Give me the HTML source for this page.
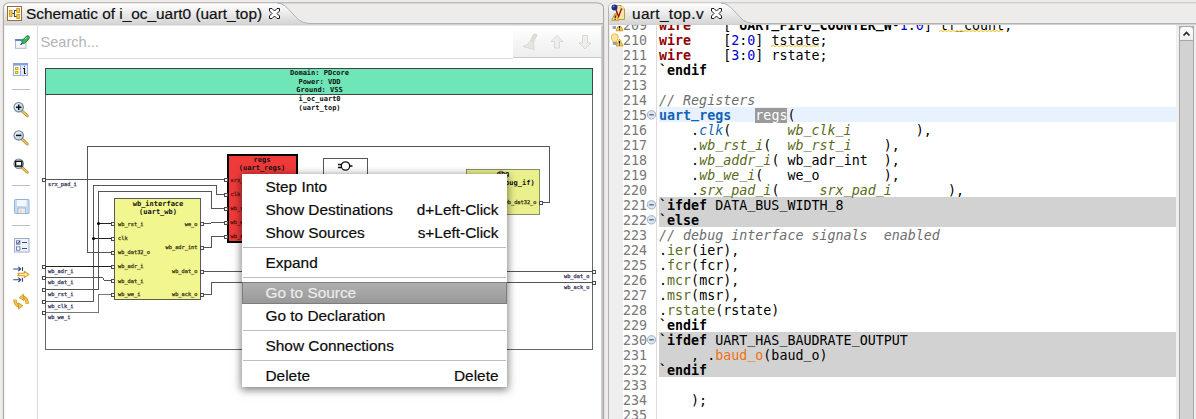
<!DOCTYPE html>
<html><head><meta charset="utf-8"><title>Schematic of i_oc_uart0 (uart_top)</title>
<style>
html,body{margin:0;padding:0;}
body{width:1196px;height:419px;overflow:hidden;background:#edeceb;position:relative;font-family:"Liberation Sans","DejaVu Sans",sans-serif;}
.abs{position:absolute;}
.tabtxt{font-size:15.4px;color:#111;-webkit-text-stroke:.2px #111;white-space:nowrap;line-height:18px;}
pre{margin:0;}
#edclip{left:609px;top:25px;width:567px;height:394px;background:#fff;overflow:hidden;}
#code,#ln{top:-7px;font-family:"DejaVu Sans Mono","Liberation Mono",monospace;font-size:13.33px;line-height:15px;white-space:pre;}
#code{left:50px;color:#000;}
#ln{left:14px;color:#787878;}
.u{position:relative;top:-2px;}
.kw{color:#930000;font-weight:bold;}
.dir{font-weight:bold;}
.num{color:#0000d0;}
.cm{color:#6e6e6e;font-style:italic;}
.mod{color:#1464b4;font-weight:bold;}
.port{color:#5a6b1a;font-style:italic;}
.portn{color:#5a6b1a;}
.org{color:#f07010;}
.sel{background:#9a9a9a;color:#fff;}
.wavy{text-decoration:underline wavy #e8c030 1px;text-underline-offset:1px;}
#menu{left:242px;top:174px;width:265px;height:213px;background:#fff;box-shadow:0 2px 8px 1px rgba(0,0,0,.5);font-size:15.4px;color:#0c0c0c;-webkit-text-stroke:.2px #0c0c0c;}
#menu .it{position:absolute;left:23.5px;white-space:nowrap;line-height:18px;}
#menu .ac{position:absolute;right:8.5px;white-space:nowrap;line-height:18px;}
#menu .sep{position:absolute;left:1px;right:1px;height:1px;background:#bdbdbd;}
#menu .hl{position:absolute;left:0;right:0;top:108px;height:22px;background:linear-gradient(#b0b0b0,#989898);box-shadow:inset 0 0 0 1px #7d7d7d;}
</style></head><body>
<svg class="abs" style="left:0;top:0" width="1196" height="419" viewBox="0 0 1196 419">
<defs>
<linearGradient id="tabg" x1="0" y1="0" x2="0" y2="1"><stop offset="0" stop-color="#ffffff"/><stop offset="0.25" stop-color="#f4f4f4"/><stop offset="1" stop-color="#d3d3d3"/></linearGradient>
<linearGradient id="sbg" x1="0" y1="0" x2="0" y2="1"><stop offset="0" stop-color="#ffffff"/><stop offset="1" stop-color="#ededed"/></linearGradient>
</defs>
<!-- left panel -->
<path d="M3.5,420 L3.5,9 Q3.5,3 9,3 L597,3 Q603.500,3 603.500,9 L603.500,420 Z" fill="#ffffff" stroke="#aeaca8" stroke-width="1.300"/>
<path d="M4,25 L4,9 Q4,3.500 9,3.500 L597,3.500 Q603,3.500 603,9 L603,25 Z" fill="#edeceb"/>
<path d="M4,25 L4,9 Q4,3.500 9,3.500 L277,3.500 C290,3.500 294,23.500 309,23.500 L603,23.500 L603,25 Z" fill="url(#tabg)"/>
<path d="M277,3 C290,3 294,23.500 309,23.500 L603,23.500" fill="none" stroke="#b3b1ad"/>
<rect x="4" y="24" width="599" height="1.500" fill="#d0d0d0"/>
<!-- left panel inner -->
<rect x="37" y="26" width="1" height="393" fill="#dcdcdc"/>
<rect x="38" y="58" width="475" height="1" fill="#dedede"/>
<rect x="513" y="26" width="88" height="32" fill="url(#sbg)"/>
<rect x="513" y="57" width="88" height="1" fill="#c9c9c9"/>
<rect x="601" y="26" width="1" height="393" fill="#cfcfcf"/><rect x="602" y="26" width="1" height="393" fill="#c2c2c2"/>
<!-- right panel -->
<path d="M608.500,420 L608.500,9 Q608.500,3 614,3 L1197,3 L1197,420 Z" fill="#ffffff" stroke="#b3b1ad"/>
<path d="M609,25 L609,9 Q609,3.500 614,3.500 L1197,3.500 L1197,25 Z" fill="#edeceb"/>
<path d="M609,25 L609,9 Q609,3.500 614,3.500 L721,3.500 C734,3.500 738,23.500 753,23.500 L1197,23.500 L1197,25 Z" fill="url(#tabg)"/>
<path d="M721,3 C734,3 738,23.500 753,23.500 L1197,23.500" fill="none" stroke="#b3b1ad"/>
<rect x="609" y="24" width="588" height="1.500" fill="#d0d0d0"/>
<!-- close X icons -->
<g fill="#ffffff" stroke="#1a1a1a" stroke-width="1" stroke-linejoin="miter">
<path id="cx" d="M269.500,8.500 L272,8.500 L274.500,11 L277,8.500 L279.500,8.500 L279.500,11 L277,13.500 L279.500,16 L279.500,18.500 L277,18.500 L274.500,16 L272,18.500 L269.500,18.500 L269.500,16 L272,13.500 L269.500,11 Z"/>
<use href="#cx" x="442" y="0"/>
</g>
<!-- scrollbar -->
<rect x="1176" y="26" width="20" height="393" fill="#efefef"/>
<rect x="1179.500" y="26.500" width="14" height="400" fill="#d2d2d2" stroke="#a8a8a8"/>
<path d="M1179.500,40.500 L1179.500,30 Q1179.500,26.500 1183,26.500 L1190,26.500 Q1193.500,26.500 1193.500,30 L1193.500,40.500 Z" fill="url(#sbg)" stroke="#a8a8a8"/>
<path d="M1183.500,35.500 L1186.500,32.500 L1189.500,35.500" fill="none" stroke="#222" stroke-width="1.600"/>
<!-- ruler line -->
<rect x="656" y="26" width="1" height="393" fill="#dddddd"/>
</svg>

<div class="abs tabtxt" style="left:26px;top:5px;">Schematic of i_oc_uart0 (uart_top)</div>
<div class="abs tabtxt" style="left:632px;top:5px;letter-spacing:.35px">uart_top.v</div>
<div class="abs" style="left:40.5px;top:33px;font-size:14.6px;line-height:18px;color:#b4b4b4;">Search...</div>
<svg class="abs" style="left:0;top:0" width="1196" height="419" viewBox="0 0 1196 419">
<defs><clipPath id="cv"><rect x="38" y="58" width="563" height="361"/></clipPath></defs>
<g clip-path="url(#cv)" shape-rendering="crispEdges">
<rect x="45.5" y="68.5" width="547" height="281" fill="#ffffff" stroke="#666666"/>
<rect x="45.5" y="68.5" width="547" height="26" fill="#6ee6b8" stroke="#444444"/>
<path d="M543,202.5 L549.5,202.5 L549.5,146.5 L87.5,146.5 L87.5,252.5 L111,252.5" fill="none" stroke="#555555" stroke-width="1"/>
<path d="M46,179.5 L224,179.5" fill="none" stroke="#555555" stroke-width="1"/>
<path d="M46,301.5 L93.5,301.5 L93.5,185.5 L216.5,185.5 L216.5,194.5 L224,194.5" fill="none" stroke="#555555" stroke-width="1"/>
<path d="M93.5,238.5 L111,238.5" fill="none" stroke="#222" stroke-width="1"/>
<path d="M46,289.5 L98.5,289.5 L98.5,191.5 L211.5,191.5 L211.5,208.5 L224,208.5" fill="none" stroke="#555555" stroke-width="1"/>
<path d="M98.5,223.5 L111,223.5" fill="none" stroke="#222" stroke-width="1"/>
<path d="M46,266.5 L111,266.5" fill="none" stroke="#222" stroke-width="1"/>
<path d="M46,277.5 L102.5,277.5 L104.5,280.5 L111,280.5" fill="none" stroke="#555555" stroke-width="1"/>
<path d="M46,312.5 L98.5,312.5 L98.5,294.5 L111,294.5" fill="none" stroke="#777" stroke-width="1"/>
<path d="M204,223.5 L210.5,223.5 L211.5,222.5 L224,222.5" fill="none" stroke="#555555" stroke-width="1"/>
<path d="M204,247.5 L211.5,247.5 L211.5,236.5 L224,236.5" fill="none" stroke="#555555" stroke-width="1"/>
<path d="M204,271.5 L593,271.5" fill="none" stroke="#555555" stroke-width="1"/>
<path d="M204,294.5 L211.5,294.5 L211.5,282.5 L593,282.5" fill="none" stroke="#555555" stroke-width="1"/>
</g><g clip-path="url(#cv)">
<circle cx="98.5" cy="223.5" r="1.5" fill="#000"/>
<circle cx="93.5" cy="238.5" r="1.5" fill="#000"/>
</g><g clip-path="url(#cv)" shape-rendering="crispEdges">
<rect x="114.5" y="198.5" width="86" height="101" fill="#f2f68e" stroke="#5a5a5a"/>
<rect x="228" y="155" width="69" height="87" fill="#f03a3a" stroke="#000" stroke-width="2"/>
<rect x="323.5" y="158.5" width="44" height="20" fill="#fff" stroke="#555"/>
<rect x="466.500" y="169.500" width="73" height="45" fill="#eaf08c" stroke="#8a8a70"/>
<rect x="42" y="178.0" width="3" height="3" fill="#fff" stroke="#3a3a3a" stroke-width="0.9"/>
<rect x="42" y="265.0" width="3" height="3" fill="#fff" stroke="#3a3a3a" stroke-width="0.9"/>
<rect x="42" y="276.0" width="3" height="3" fill="#fff" stroke="#3a3a3a" stroke-width="0.9"/>
<rect x="42" y="288.0" width="3" height="3" fill="#fff" stroke="#3a3a3a" stroke-width="0.9"/>
<rect x="42" y="300.0" width="3" height="3" fill="#fff" stroke="#3a3a3a" stroke-width="0.9"/>
<rect x="42" y="311.0" width="3" height="3" fill="#fff" stroke="#3a3a3a" stroke-width="0.9"/>
<rect x="111.5" y="222.0" width="3" height="3" fill="#f8f8f8" stroke="#3a3a3a" stroke-width="0.9"/>
<rect x="111.5" y="237.0" width="3" height="3" fill="#f8f8f8" stroke="#3a3a3a" stroke-width="0.9"/>
<rect x="111.5" y="251.0" width="3" height="3" fill="#f8f8f8" stroke="#3a3a3a" stroke-width="0.9"/>
<rect x="111.5" y="265.0" width="3" height="3" fill="#f8f8f8" stroke="#3a3a3a" stroke-width="0.9"/>
<rect x="111.5" y="279.0" width="3" height="3" fill="#f8f8f8" stroke="#3a3a3a" stroke-width="0.9"/>
<rect x="111.5" y="293.0" width="3" height="3" fill="#f8f8f8" stroke="#3a3a3a" stroke-width="0.9"/>
<rect x="200.5" y="222.0" width="3" height="3" fill="#f8f8f8" stroke="#3a3a3a" stroke-width="0.9"/>
<rect x="200.5" y="246.0" width="3" height="3" fill="#f8f8f8" stroke="#3a3a3a" stroke-width="0.9"/>
<rect x="200.5" y="270.0" width="3" height="3" fill="#f8f8f8" stroke="#3a3a3a" stroke-width="0.9"/>
<rect x="200.5" y="293.0" width="3" height="3" fill="#f8f8f8" stroke="#3a3a3a" stroke-width="0.9"/>
<rect x="224.5" y="178.0" width="3" height="3" fill="#f8f8f8" stroke="#3a3a3a" stroke-width="0.9"/>
<rect x="224.5" y="193.0" width="3" height="3" fill="#f8f8f8" stroke="#3a3a3a" stroke-width="0.9"/>
<rect x="224.5" y="207.0" width="3" height="3" fill="#f8f8f8" stroke="#3a3a3a" stroke-width="0.9"/>
<rect x="224.5" y="221.0" width="3" height="3" fill="#f8f8f8" stroke="#3a3a3a" stroke-width="0.9"/>
<rect x="224.5" y="235.0" width="3" height="3" fill="#f8f8f8" stroke="#3a3a3a" stroke-width="0.9"/>
<rect x="539.5" y="201.0" width="3" height="3" fill="#f8f8f8" stroke="#3a3a3a" stroke-width="0.9"/>
<rect x="592.5" y="270.0" width="3" height="3" fill="#fff" stroke="#3a3a3a" stroke-width="0.9"/>
<rect x="592.5" y="281.0" width="3" height="3" fill="#fff" stroke="#3a3a3a" stroke-width="0.9"/>
</g>
<g clip-path="url(#cv)" fill="none" stroke="#111" stroke-width="1.3"><circle cx="345.5" cy="166" r="4.2"/><path d="M338,164.500 L341.500,164.500 M338,167.500 L341.500,167.500 M349.700,166 L352.500,166"/></g>
<g clip-path="url(#cv)" font-family="'DejaVu Sans Mono','Liberation Mono',monospace">
<text x="319.5" y="75" font-size="7" text-anchor="middle" font-weight="bold" fill="#111">Domain: PDcore</text>
<text x="319.5" y="83.7" font-size="7" text-anchor="middle" font-weight="bold" fill="#111">Power: VDD</text>
<text x="319.5" y="92.2" font-size="7" text-anchor="middle" font-weight="bold" fill="#111">Ground: VSS</text>
<text x="319.5" y="100.5" font-size="7" text-anchor="middle" font-weight="bold" fill="#111">i_oc_uart0</text>
<text x="319.5" y="110" font-size="7" text-anchor="middle" font-weight="bold" fill="#111">(uart_top)</text>
<text x="158" y="206" font-size="7" text-anchor="middle" font-weight="bold" fill="#111">wb_interface</text>
<text x="158" y="214" font-size="7" text-anchor="middle" font-weight="bold" fill="#111">(uart_wb)</text>
<text x="262" y="162" font-size="7" text-anchor="middle" font-weight="bold" fill="#111">regs</text>
<text x="262" y="169.7" font-size="7" text-anchor="middle" font-weight="bold" fill="#111">(uart_regs)</text>
<text x="503" y="176" font-size="7" text-anchor="middle" font-weight="bold" fill="#111">dbg</text>
<text x="503" y="185" font-size="7" text-anchor="middle" font-weight="bold" fill="#111">(uart_debug_if)</text>
<text x="48" y="186.3" font-size="5.3" text-anchor="start" fill="#34345a" stroke="#34345a" stroke-width="0.25">srx_pad_i</text>
<text x="48" y="273.3" font-size="5.3" text-anchor="start" fill="#34345a" stroke="#34345a" stroke-width="0.25">wb_adr_i</text>
<text x="48" y="284.3" font-size="5.3" text-anchor="start" fill="#34345a" stroke="#34345a" stroke-width="0.25">wb_dat_i</text>
<text x="48" y="296" font-size="5.3" text-anchor="start" fill="#34345a" stroke="#34345a" stroke-width="0.25">wb_rst_i</text>
<text x="48" y="308" font-size="5.3" text-anchor="start" fill="#34345a" stroke="#34345a" stroke-width="0.25">wb_clk_i</text>
<text x="48" y="318.8" font-size="5.3" text-anchor="start" fill="#34345a" stroke="#34345a" stroke-width="0.25">wb_we_i</text>
<text x="118" y="225.5" font-size="5.3" text-anchor="start" fill="#3c3410" stroke="#3c3410" stroke-width="0.25">wb_rst_i</text>
<text x="118" y="240.3" font-size="5.3" text-anchor="start" fill="#3c3410" stroke="#3c3410" stroke-width="0.25">clk</text>
<text x="118" y="254.3" font-size="5.3" text-anchor="start" fill="#3c3410" stroke="#3c3410" stroke-width="0.25">wb_dat32_o</text>
<text x="118" y="268.3" font-size="5.3" text-anchor="start" fill="#3c3410" stroke="#3c3410" stroke-width="0.25">wb_adr_i</text>
<text x="118" y="282.5" font-size="5.3" text-anchor="start" fill="#3c3410" stroke="#3c3410" stroke-width="0.25">wb_dat_i</text>
<text x="118" y="296.3" font-size="5.3" text-anchor="start" fill="#3c3410" stroke="#3c3410" stroke-width="0.25">wb_we_i</text>
<text x="197.5" y="225.5" font-size="5.3" text-anchor="end" fill="#3c3410" stroke="#3c3410" stroke-width="0.25">we_o</text>
<text x="197.5" y="249.2" font-size="5.3" text-anchor="end" fill="#3c3410" stroke="#3c3410" stroke-width="0.25">wb_adr_int</text>
<text x="197.5" y="272.8" font-size="5.3" text-anchor="end" fill="#3c3410" stroke="#3c3410" stroke-width="0.25">wb_dat_o</text>
<text x="197.5" y="296.3" font-size="5.3" text-anchor="end" fill="#3c3410" stroke="#3c3410" stroke-width="0.25">wb_ack_o</text>
<text x="230.5" y="181.5" font-size="5.3" text-anchor="start" fill="#5a1010" stroke="#5a1010" stroke-width="0.25">srx_pad_i</text>
<text x="230.5" y="196.3" font-size="5.3" text-anchor="start" fill="#5a1010" stroke="#5a1010" stroke-width="0.25">clk</text>
<text x="230.5" y="210.3" font-size="5.3" text-anchor="start" fill="#5a1010" stroke="#5a1010" stroke-width="0.25">wb_rst_i</text>
<text x="230.5" y="224.3" font-size="5.3" text-anchor="start" fill="#5a1010" stroke="#5a1010" stroke-width="0.25">wb_we_i</text>
<text x="230.5" y="238.3" font-size="5.3" text-anchor="start" fill="#5a1010" stroke="#5a1010" stroke-width="0.25">wb_addr_i</text>
<text x="536.5" y="204.3" font-size="5.3" text-anchor="end" fill="#3c3410" stroke="#3c3410" stroke-width="0.25">wb_dat32_o</text>
<text x="589.5" y="278.3" font-size="5.3" text-anchor="end" fill="#34345a" stroke="#34345a" stroke-width="0.25">wb_dat_o</text>
<text x="589.5" y="289" font-size="5.3" text-anchor="end" fill="#34345a" stroke="#34345a" stroke-width="0.25">wb_ack_o</text>
</g>
</svg>
<svg class="abs" style="left:0;top:0" width="1196" height="419" viewBox="0 0 1196 419">
<defs>
<linearGradient id="lens" x1="0" y1="0" x2="1" y2="1"><stop offset="0" stop-color="#f4f9fd"/><stop offset="1" stop-color="#a9c8e6"/></linearGradient>
<linearGradient id="gold" x1="0" y1="0" x2="0" y2="1"><stop offset="0" stop-color="#fbe9a8"/><stop offset="1" stop-color="#e0a020"/></linearGradient>
<g id="mag">
<path d="M3.600,4 L8.600,8.600" stroke="#a88430" stroke-width="2.800" stroke-linecap="round" fill="none"/>
<path d="M3.600,4 L8.600,8.600" stroke="#f2cc58" stroke-width="1.400" stroke-linecap="round" fill="none"/>
<circle cx="0" cy="0" r="4.700" fill="url(#lens)" stroke="#6f8193" stroke-width="1.100"/>
</g>
</defs>
<!-- 1 pin editor -->
<rect x="15.500" y="39.500" width="10.500" height="8.800" fill="#f5f8fd" stroke="#a9bbd8"/>
<rect x="15" y="39" width="11.500" height="2" fill="#5a88d2"/>
<path d="M20.600,44.800 L23,42.400" stroke="#1d2f4c" stroke-width="1.100"/>
<path d="M23.600,41.600 L27.600,37.600" stroke="#1f7a34" stroke-width="4.400" stroke-linecap="round"/>
<path d="M23.600,41.600 L27.600,37.600" stroke="#3db556" stroke-width="3" stroke-linecap="round"/>
<path d="M25,38.800 L26.400,37.400" stroke="#a6e6b2" stroke-width="1" stroke-linecap="round"/>
<!-- 2 module info -->
<rect x="13.500" y="63.500" width="14" height="12" fill="#ffffff" stroke="#8fb0e4"/>
<rect x="13" y="63" width="15" height="2.600" fill="#7aa4e6"/>
<rect x="20.500" y="65.600" width="6.500" height="9.400" fill="#ebebeb"/>
<rect x="20" y="65.600" width="1" height="9.900" fill="#8fb0e4"/>
<rect x="15" y="67" width="3.400" height="3" fill="#dda800"/><rect x="16.100" y="68" width="1.200" height="1" fill="#fff4b8"/>
<rect x="15" y="71" width="3.400" height="3" fill="#dda800"/><rect x="16.100" y="72" width="1.200" height="1" fill="#fff4b8"/>
<path d="M23,68.500 L24.500,68.500 L24.500,73.500 L25.800,73.500 M24.200,66.600 L24.800,66.600" stroke="#111" stroke-width="1.100" fill="none"/>
<rect x="12" y="89" width="18" height="1" fill="#bdbdbd"/>
<!-- zoom in/out/fit -->
<use href="#mag" x="18.700" y="107.200"/>
<path d="M16,107.200 L21.400,107.200 M18.700,104.500 L18.700,109.900" stroke="#111" stroke-width="1.500"/>
<use href="#mag" x="18.700" y="135.400"/>
<path d="M16,135.400 L21.400,135.400" stroke="#111" stroke-width="1.500"/>
<use href="#mag" x="18.700" y="163.700"/>
<rect x="15.600" y="161.300" width="6.200" height="4.800" fill="#fff" stroke="#111" stroke-width="1.400"/>
<rect x="12" y="185" width="18" height="1" fill="#bdbdbd"/>
<!-- save (disabled) -->
<rect x="14.500" y="199.500" width="14.500" height="14" rx="1" fill="#c9dbf2" stroke="#92b0dc"/>
<rect x="17" y="200" width="9.500" height="6" fill="#f3f7fc"/>
<rect x="18" y="208" width="7.500" height="5.500" fill="#e8eef8" stroke="#92b0dc" stroke-width=".8"/>
<rect x="19.500" y="209.500" width="2.500" height="3" fill="#f2dca0"/>
<rect x="12" y="225" width="18" height="1" fill="#bdbdbd"/>
<!-- checklist -->
<rect x="14.500" y="238.500" width="14.500" height="13.500" fill="#eef2fa" stroke="#9aaed4"/>
<rect x="16.500" y="240.800" width="3.400" height="3.400" fill="#fff" stroke="#5a6a9a" stroke-width=".8"/>
<rect x="16.500" y="246.800" width="3.400" height="3.400" fill="#fff" stroke="#5a6a9a" stroke-width=".8"/>
<path d="M17,242.500 L18,243.600 L19.800,241" stroke="#223" stroke-width=".9" fill="none"/>
<path d="M22,242.500 L27,242.500 M22,248.500 L27,248.500" stroke="#3a4a8a" stroke-width="1.100"/>
<!-- search bar icons (disabled) -->
<g opacity=".9">
<path d="M533.500,34.500 Q535.500,33.500 537,35 L533.500,42 L530.500,40.500 Z" fill="#dedcd8" stroke="#cfcdc8" stroke-width=".8"/>
<path d="M530.500,40.500 L533.500,42 L534,49.500 L523,46.500 Q528,45 530.500,40.500 Z" fill="#e6e4df" stroke="#d4d2cc" stroke-width=".8"/>
<path d="M557,35.500 L563,41.500 L559.500,41.500 L559.500,48 L554.500,48 L554.500,41.500 L551,41.500 Z" fill="#efeeec" stroke="#d6d5d1" stroke-width="1" stroke-linejoin="round"/>
<path d="M585,49 L591,43 L587.500,43 L587.500,35.500 L582.500,35.500 L582.500,43 L579,43 Z" fill="#efeeec" stroke="#d6d5d1" stroke-width="1" stroke-linejoin="round"/>
</g>
<!-- tab icon: schematic -->
<rect x="7.500" y="6.500" width="14" height="14" fill="#ffffff" stroke="#9b6a3c"/>
<rect x="9.500" y="10.500" width="2.500" height="6" fill="#f6d040" stroke="#c89a10" stroke-width=".9"/>
<rect x="16.800" y="8.500" width="2.600" height="4" fill="#f6d040" stroke="#c89a10" stroke-width=".9"/>
<rect x="16.800" y="14.500" width="2.600" height="4" fill="#f6d040" stroke="#c89a10" stroke-width=".9"/>
<path d="M12.300,13.500 L14.500,13.500 M16.500,10.500 L14.500,10.500 L14.500,16.500 L16.500,16.500" stroke="#444" stroke-width="1.100" fill="none"/>

<!-- arrows -->
<path d="M13.200,269 L20.500,269 M18.300,266.800 L20.700,269 L18.300,271.200 M22.500,267 L22.500,271" stroke="#2a4a80" stroke-width="1.100" fill="none"/>
<path d="M13.200,279.800 L20.500,279.800 M18.300,277.600 L20.700,279.800 L18.300,282 M22.500,277.800 L22.500,281.800" stroke="#2a4a80" stroke-width="1.100" fill="none"/>
<path d="M17.800,273.200 L24.300,273.200 L24.300,271.300 L28.800,274.400 L24.300,277.500 L24.300,275.700 L17.800,275.700 L19,274.400 Z" fill="#fdf0c0" stroke="#dc9c1c" stroke-width="1.100" stroke-linejoin="round"/>
<!-- refresh -->
<g fill="none" stroke="#c98d14" stroke-width="3.400"><path d="M27,303.700 A5.600,5.600 0 0 0 22.500,297.200"/><path d="M15.200,299.600 A5.600,5.600 0 0 0 19.700,306.100"/></g>
<g fill="none" stroke="#f3c64a" stroke-width="2"><path d="M27,303.400 A5.600,5.600 0 0 0 22.500,297.200"/><path d="M15.200,299.900 A5.600,5.600 0 0 0 19.700,306.100"/></g>
<g fill="#f3c64a" stroke="#c98d14" stroke-width=".8" stroke-linejoin="round"><path d="M19.300,297.600 L23.600,294.200 L23.900,300.400 Z"/><path d="M22.900,305.700 L18.600,309.100 L18.300,302.900 Z"/></g>
</svg>

<div id="edclip" class="abs">
<div class="abs" style="left:50px;top:82px;width:517px;height:15px;background:#e8f2fe;"></div>
<div class="abs" style="left:50px;top:172px;width:517px;height:30px;background:#d2d2d2;"></div>
<div class="abs" style="left:50px;top:307px;width:517px;height:45px;background:#d2d2d2;"></div>
<pre id="ln" class="abs">209
210
211
212
213
214
215
216
217
218
219
220
221
222
223
224
225
226
227
228
229
230
231
232
233
234
235</pre>
<pre id="code" class="abs"><span class="kw">wire</span>    [<span class="dir">`UART<span class="u">_</span>FIFO<span class="u">_</span>COUNTER<span class="u">_</span>W</span>-<span class="num">1</span>:<span class="num">0</span>] tf<span class="u">_</span>count;
<span class="kw">wire</span>    [<span class="num">2</span>:<span class="num">0</span>] tstate;
<span class="kw">wire</span>    [<span class="num">3</span>:<span class="num">0</span>] rstate;
<span class="dir">`endif</span>

<span class="cm">// Registers</span>
<span class="mod">uart<span class="u">_</span>regs</span>   <span class="sel">regs</span>(
    .<span class="port" style="color:#1464b4">clk</span>(       <span class="port">wb<span class="u">_</span>clk<span class="u">_</span>i</span>        ),
    .<span class="port">wb<span class="u">_</span>rst<span class="u">_</span>i</span>(  <span class="port">wb<span class="u">_</span>rst<span class="u">_</span>i</span>    ),
    .<span class="port">wb<span class="u">_</span>addr<span class="u">_</span>i</span>( wb<span class="u">_</span>adr<span class="u">_</span>int  ),
    .<span class="port">wb<span class="u">_</span>we<span class="u">_</span>i</span>(   we<span class="u">_</span>o        ),
    .<span class="port">srx<span class="u">_</span>pad<span class="u">_</span>i</span>(     <span class="port">srx<span class="u">_</span>pad<span class="u">_</span>i</span>       ),
<span class="dir">`ifdef</span> DATA<span class="u">_</span>BUS<span class="u">_</span>WIDTH<span class="u">_</span>8
<span class="dir">`else</span>
<span class="cm">// debug interface signals  enabled</span>
.<span class="portn">ier</span>(ier),
.<span class="portn">fcr</span>(fcr),
.<span class="portn">mcr</span>(mcr),
.<span class="portn">msr</span>(msr),
.<span class="portn">rstate</span>(rstate)
<span class="dir">`endif</span>
<span class="dir">`ifdef</span> UART<span class="u">_</span>HAS<span class="u">_</span>BAUDRATE<span class="u">_</span>OUTPUT
    , .<span class="org">baud<span class="u">_</span>o</span>(baud<span class="u">_</span>o)
<span class="dir">`endif</span>

    );
</pre>
</div>
<svg class="abs" style="left:0;top:0" width="1196" height="419" viewBox="0 0 1196 419">
<defs>
<g id="fold"><circle cx="0" cy="0" r="4.200" fill="#dde7f1" stroke="#9fb0c4" stroke-width="1"/><path d="M-2.300,0 L2.300,0" stroke="#4a5a70" stroke-width="1.200"/></g>
<g id="warn"><path d="M3.500,0.500 L7,7.500 L0,7.500 Z" fill="#f9d668" stroke="#c8941c" stroke-width=".9" stroke-linejoin="round"/><path d="M3.500,2.800 L3.500,5.200 M3.500,6 L3.500,6.900" stroke="#111" stroke-width="1.100"/></g>
<clipPath id="gc"><rect x="609" y="26" width="50" height="393"/></clipPath>
</defs>
<rect x="609" y="26" width="14" height="393" fill="#eeeeee"/>
<rect x="656" y="26" width="1" height="393" fill="#dcdcdc"/>
<rect x="610" y="26" width="13" height="21" fill="#ffffff"/>
<!-- line 209 icon remnants -->
<g clip-path="url(#gc)"><rect x="612.500" y="26" width="3.500" height="3" fill="#9aa7b8"/>
<use href="#warn" x="616" y="23.300"/></g>
<!-- line 210: bulb + warning -->
<path d="M614.800,33.800 Q618.300,33.800 618.300,37.200 Q618.300,39 616.800,40.600 L616.800,42 L612.800,42 L612.800,40.600 Q611.300,39 611.300,37.200 Q611.300,33.800 614.800,33.800 Z" fill="#fbe59a" stroke="#e2b84a" stroke-width=".9"/>
<rect x="612.800" y="42" width="4" height="2.800" fill="#8f9db2"/>
<use href="#warn" x="616" y="38.500"/>
<use href="#fold" x="651.500" y="114.800"/>
<use href="#fold" x="651.500" y="204.800"/>
<use href="#fold" x="651.500" y="219.800"/>
<use href="#fold" x="651.500" y="339.800"/>
<path d="M771,46.5 L773,45.5 L775,46.5 L777,45.5 L779,46.5 L781,45.5 L783,46.5 L785,45.5 L787,46.5 L789,45.5 L791,46.5 L793,45.5 L795,46.5 L797,45.5 L799,46.5 L801,45.5 L803,46.5 L805,45.5 L807,46.5 L809,45.5 L811,46.5 L813,45.5 L815,46.5 L817,45.5 L819,46.5" fill="none" stroke="#efbf28" stroke-width="1"/>
<path d="M939,31.5 L941,30.5 L943,31.5 L945,30.5 L947,31.5 L949,30.5 L951,31.5 L953,30.5 L955,31.5 L957,30.5 L959,31.5 L961,30.5 L963,31.5 L965,30.5 L967,31.5 L969,30.5 L971,31.5 L973,30.5 L975,31.5 L977,30.5 L979,31.5 L981,30.5 L983,31.5 L985,30.5 L987,31.5 L989,30.5 L991,31.5 L993,30.5 L995,31.5 L997,30.5 L999,31.5 L1001,30.5 L1003,31.5" fill="none" stroke="#efbf28" stroke-width="1"/>
<!-- tab icon: verilog file -->
<path d="M616.500,5.500 L621,5.500 L624.500,9 L624.500,19.500 L616.500,19.500 Z" fill="#f8e6a8" stroke="#c69a3c"/>
<path d="M621,5.500 L621,9 L624.500,9" fill="#fff6d8" stroke="#c69a3c" stroke-width=".8"/>
<path d="M616,9.800 L618.600,16.600 L621.600,8.600" stroke="#a01010" stroke-width="1.300" fill="none"/>
<circle cx="614.500" cy="7.500" r="3" fill="#1c2a8c"/>
<circle cx="613.700" cy="6.600" r="1" fill="#6a78d8"/>
<use href="#warn" x="611.700" y="12.800"/>
</svg>

<div id="menu" class="abs">
<div class="hl"></div>
<div class="it" style="top:4px">Step Into</div>
<div class="it" style="top:27px">Show Destinations</div><div class="ac" style="top:27px">d+Left-Click</div>
<div class="it" style="top:50px">Show Sources</div><div class="ac" style="top:50px">s+Left-Click</div>
<div class="sep" style="top:73px"></div>
<div class="it" style="top:80px">Expand</div>
<div class="sep" style="top:103px"></div>
<div class="it" style="top:110px;color:#ececec;-webkit-text-stroke:.2px #ececec">Go to Source</div>
<div class="it" style="top:133px">Go to Declaration</div>
<div class="sep" style="top:156px"></div>
<div class="it" style="top:163px">Show Connections</div>
<div class="sep" style="top:186px"></div>
<div class="it" style="top:193px">Delete</div><div class="ac" style="top:193px">Delete</div>
</div>
</body></html>
